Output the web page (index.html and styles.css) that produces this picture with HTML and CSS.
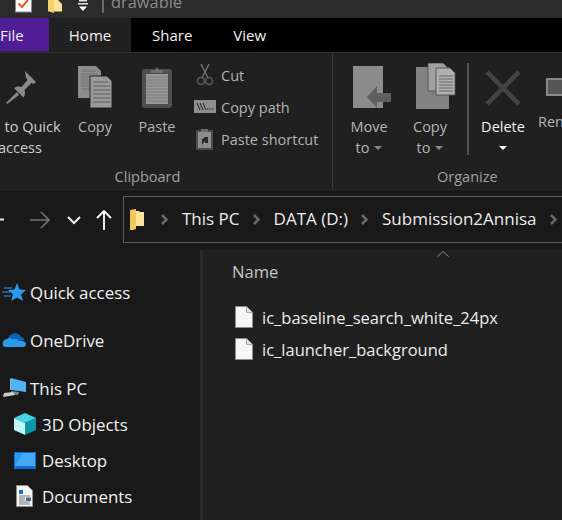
FILE: index.html
```html
<!DOCTYPE html>
<html lang="en">
<head>
<meta charset="utf-8">
<title>drawable</title>
<link rel="stylesheet" href="styles.css">
</head>
<body>
<div class="window">
  <header class="titlebar">
    <svg class="qa-check" width="18" height="13" viewBox="0 0 18 13"><rect x="0.5" y="-4" width="16" height="16" fill="#fff" stroke="#8f8f8f"/><path d="M3.5 3.5l3.5 3.5 6-7" fill="none" stroke="#e8591f" stroke-width="2"/></svg>
    <svg class="qa-folder" width="15" height="13" viewBox="0 0 15 13"><path d="M0 0h6v13l-5-1.500H0z" fill="#f4d06f"/><path d="M6 0h4l4 4v7.500H6z" fill="#fbe39a"/></svg>
    <svg class="qa-more" width="10" height="13" viewBox="0 0 10 13"><path d="M1 0h8v1.500H1zM0 3h10v1.500H0z" fill="#e6e6e6"/><path d="M1 6.500h8L5 11z" fill="#fff"/></svg>
    <span class="title-sep"></span>
    <span class="title-text">drawable</span>
  </header>

  <nav class="tabs">
    <span class="tab tab-file">File</span>
    <span class="tab tab-home">Home</span>
    <span class="tab tab-share">Share</span>
    <span class="tab tab-view">View</span>
  </nav>

  <section class="ribbon">
    <div class="group group-clipboard">
      <div class="group-body">
        <div class="big big-pin">
          <svg class="big-icon" width="36" height="42" viewBox="0 0 36 42"><path d="M23 5l11 11-2.500 2-2-1-7 7c1 3.500.5 5.500-1 7.500L12 22c2-1.500 4.500-2 7.500-1l6-7-1.500-2.500z" fill="#8b8b8b"/><path d="M15 26l-11 11 1 1 12-9z" fill="#8b8b8b"/></svg>
          <span class="big-label">Pin to Quick<br>access</span>
        </div>
        <div class="big big-copy">
          <svg class="big-icon" width="36" height="42" viewBox="0 0 36 42"><path d="M1 0h18l5 5v27H1z" fill="#8d8d8d"/><path d="M4 5h15M4 8h17M4 11h17M4 14h17M4 17h17M4 20h17M4 23h17" stroke="#707070"/><path d="M13 10h17l5 5v27H13z" fill="#9a9a9a" stroke="#222"/><path d="M16 16h15M16 20h17M16 24h17M16 28h17M16 32h17M16 36h17" stroke="#5e5e5e"/></svg>
          <span class="big-label">Copy</span>
        </div>
        <div class="big big-paste">
          <svg class="big-icon" width="30" height="42" viewBox="0 0 30 42"><rect x="0" y="3" width="30" height="39" rx="3" fill="#4f4f4f"/><rect x="4" y="8" width="22" height="30" fill="#979797"/><path d="M4 11h22M4 14h22M4 17h22M4 20h22M4 23h22M4 26h22M4 29h22M4 32h22M4 35h22" stroke="#7d7d7d"/><path d="M9 7V4h4l2-3 2 3h4v3z" fill="#6f6f6f"/></svg>
          <span class="big-label">Paste</span>
        </div>
        <div class="small-list">
          <div class="small">
            <svg class="small-icon" width="18" height="22" viewBox="0 0 18 22"><path d="M5 0l7 14M13 0L6 14" stroke="#6f6f6f" stroke-width="1.500" fill="none"/><circle cx="5" cy="17" r="3.500" fill="none" stroke="#5c5c5c" stroke-width="1.500"/><circle cx="13" cy="17" r="3.500" fill="none" stroke="#5c5c5c" stroke-width="1.500"/></svg>
            <span>Cut</span>
          </div>
          <div class="small">
            <svg class="small-icon" width="22" height="14" viewBox="0 0 22 14"><rect width="22" height="13" fill="#8e8e8e"/><path d="M3 3l3 7M6 3l3 7M9 3l3 7" stroke="#222" stroke-width="1"/><path d="M13 9h7" stroke="#222" stroke-dasharray="1.500 1"/></svg>
            <span>Copy path</span>
          </div>
          <div class="small">
            <svg class="small-icon" width="18" height="22" viewBox="0 0 18 22"><rect y="2" width="17" height="20" rx="1" fill="#4d4d4d"/><rect x="2" y="4" width="13" height="16" fill="#8d8d8d"/><path d="M5 1h7v3H5z" fill="#6a6a6a"/><path d="M6 17v-5l-1 0 4-3 3 0v6l-3 0v-2z" fill="#2a2a2a"/></svg>
            <span>Paste shortcut</span>
          </div>
        </div>
      </div>
      <div class="group-name">Clipboard</div>
    </div>

    <div class="group group-organize">
      <div class="group-body">
        <div class="big big-move">
          <svg class="big-icon" width="40" height="42" viewBox="0 0 40 42"><path d="M1 0h30v42H1z" fill="#8c8c8c"/><path d="M15 31l10-11v7h14v9H25v6z" fill="#5f5f5f"/></svg>
          <span class="big-label">Move<br>to<i class="caret"></i></span>
        </div>
        <div class="big big-copyto">
          <svg class="big-icon" width="41" height="46" viewBox="0 0 41 46"><path d="M1 4h33v42H1z" fill="#828282"/><path d="M13 0h15l5 5v23H13z" fill="#a0a0a0" stroke="#555"/><path d="M21 5h14l5 5v22H21z" fill="#b0b0b0" stroke="#555"/><path d="M24 13h14M24 16h14M24 19h14M24 22h14M24 25h14M24 28h14" stroke="#666"/></svg>
          <span class="big-label">Copy<br>to<i class="caret"></i></span>
        </div>
        <span class="org-sep"></span>
        <div class="big big-delete">
          <svg class="big-icon" width="36" height="36" viewBox="0 0 36 36"><path d="M2 2l32 32M34 2L2 34" stroke="#454545" stroke-width="4.500" fill="none"/></svg>
          <span class="big-label strong">Delete<br><i class="caret caret-white"></i></span>
        </div>
        <div class="big big-rename">
          <svg class="big-icon" width="24" height="18" viewBox="0 0 24 18"><rect x="1" y="1" width="22" height="16" fill="#555" stroke="#8a8a8a" stroke-width="2"/></svg>
          <span class="big-label">Rename</span>
        </div>
      </div>
      <div class="group-name">Organize</div>
    </div>
  </section>

  <div class="addressbar">
    <svg class="nav-back" width="4" height="3" viewBox="0 0 4 3"><path d="M0 1.500h4" stroke="#e8e8e8" stroke-width="2"/></svg>
    <svg class="nav-forward" width="20" height="18" viewBox="0 0 20 18"><path d="M0 9h19M11 1l8 8-8 8" fill="none" stroke="#767676" stroke-width="1.600"/></svg>
    <svg class="nav-recent" width="14" height="9" viewBox="0 0 14 9"><path d="M1 1l6 6 6-6" fill="none" stroke="#eee" stroke-width="2"/></svg>
    <svg class="nav-up" width="16" height="20" viewBox="0 0 16 20"><path d="M8 20V1M1 8l7-7 7 7" fill="none" stroke="#fff" stroke-width="1.800"/></svg>
    <div class="crumbs">
      <svg class="crumb-folder" width="15" height="21" viewBox="0 0 15 21"><path d="M0 1l6-1v20l-3 1H0z" fill="#f1c75e"/><path d="M6 2h3l1 1h4v14H6z" fill="#fbe29a"/></svg>
      <svg class="chev" width="7" height="11" viewBox="0 0 7 11"><path d="M1 1l4.500 4.500L1 10" fill="none" stroke="#6a6a6a" stroke-width="2.500"/></svg><span class="crumb">This PC</span>
      <svg class="chev" width="7" height="11" viewBox="0 0 7 11"><path d="M1 1l4.500 4.500L1 10" fill="none" stroke="#6a6a6a" stroke-width="2.500"/></svg><span class="crumb">DATA (D:)</span>
      <svg class="chev" width="7" height="11" viewBox="0 0 7 11"><path d="M1 1l4.500 4.500L1 10" fill="none" stroke="#6a6a6a" stroke-width="2.500"/></svg><span class="crumb">Submission2Annisa</span>
      <svg class="chev" width="7" height="11" viewBox="0 0 7 11"><path d="M1 1l4.500 4.500L1 10" fill="none" stroke="#6a6a6a" stroke-width="2.500"/></svg>
    </div>
  </div>

  <div class="content">
    <aside class="sidebar">
      <div class="nav-row head">
        <svg class="nav-icon" width="24" height="18" viewBox="0 0 24 18"><path d="M15 0l2.500 6.500L24 7l-5 4.500L21 18l-6-3.500L9 18l2-6.500L6 7l6.500-.5z" fill="#2a9bf0"/><path d="M2 5h8M0 9h8M2 13h7" stroke="#2a9bf0"/></svg>
        <span>Quick access</span>
      </div>
      <div class="nav-row head">
        <svg class="nav-icon" width="24" height="18" viewBox="0 0 24 18"><path d="M6 8a7 7 0 0 1 13-2c2 0 3 1 3 3l-16 0z" fill="#0c64b8"/><path d="M1 14c-1-3 1-6 4-6 2-1.500 4-1 6 .5 3-1 5 0 6 1 3-.5 7 1 7 3.500 0 2-1 3-3 3H4c-2 0-3-1-3-2z" fill="#2a9be8"/></svg>
        <span>OneDrive</span>
      </div>
      <div class="nav-row head">
        <svg class="nav-icon" width="24" height="20" viewBox="0 0 24 20"><path d="M9 0l15 4v10l-15-2z" fill="#4db4f5"/><path d="M9 0l-1 1v11l1 0z" fill="#9fb4c4"/><path d="M9 13l8 1-1 3-6-1z" fill="#888"/><path d="M2 15l9-1 2 3-12 2z" fill="#cfcfcf"/></svg>
        <span>This PC</span>
      </div>
      <div class="nav-row child">
        <svg class="nav-icon" width="22" height="22" viewBox="0 0 22 22"><path d="M11 0l11 5-11 5L0 5z" fill="#45d3e6"/><path d="M0 5l11 5v12L0 17z" fill="#c2f2f5"/><path d="M22 5l-11 5v12l11-5z" fill="#0d97ab"/></svg>
        <span>3D Objects</span>
      </div>
      <div class="nav-row child">
        <svg class="nav-icon" width="22" height="17" viewBox="0 0 22 17"><rect width="22" height="17" fill="#0a6fd0"/><rect x="1" y="1" width="20" height="13" fill="#2a9bf2"/><path d="M1 14L9 1h12v13z" fill="#46a9f5"/></svg>
        <span>Desktop</span>
      </div>
      <div class="nav-row child">
        <svg class="nav-icon doc" width="17" height="22" viewBox="0 0 17 22"><path d="M.5.500h11l5 5v16H.5z" fill="#f4f4f4" stroke="#8f8f8f"/><path d="M3 7h4" stroke="#1e6fc8" stroke-width="4"/><path d="M3 11h11M3 13h6M3 15h6M3 17h11M3 19h11" stroke="#777"/><rect x="10" y="12.500" width="5" height="3.500" fill="#3d6c98"/></svg>
        <span>Documents</span>
      </div>
    </aside>
    <main class="files">
      <svg class="sort-caret" width="12" height="6" viewBox="0 0 12 6"><path d="M.5 5.500L6 .5l5.500 5" fill="none" stroke="#8a8a8a"/></svg>
      <div class="col-name">Name</div>
      <div class="file-row">
        <svg class="file-icon" width="18" height="22" viewBox="0 0 18 22"><path d="M.5.500h11l6 6v15H.5z" fill="#f6f6f6" stroke="#8d8d8d"/><path d="M11.500.500v6h6" fill="#ddd" stroke="#aaa"/></svg>
        <span>ic_baseline_search_white_24px</span>
      </div>
      <div class="file-row">
        <svg class="file-icon" width="18" height="22" viewBox="0 0 18 22"><path d="M.5.500h11l6 6v15H.5z" fill="#f6f6f6" stroke="#8d8d8d"/><path d="M11.500.500v6h6" fill="#ddd" stroke="#aaa"/></svg>
        <span>ic_launcher_background</span>
      </div>
    </main>
  </div>
</div>
</body>
</html>
```

FILE: styles.css
```css
* { box-sizing: border-box; }
html, body { margin: 0; padding: 0; }
body {
  width: 562px;
  height: 520px;
  overflow: hidden;
  background: #191919;
  font-family: "Open Sans", "Noto Sans", sans-serif;
  font-size: 15px;
  color: #fff;
}
.window { width: 562px; height: 520px; display: flex; flex-direction: column; overflow: hidden; }

.titlebar {
  height: 18px; flex: none; background: #2b2b2b; display: flex; align-items: flex-start;
  overflow: hidden; padding-left: 15px;
}
.qa-folder { margin-left: 15px; }
.qa-more { margin-left: 15px; }
.title-sep { width: 2px; height: 13px; background: #6a6a6a; margin-left: 14px; }
.title-text { margin-left: 7px; margin-top: -9px; color: #8a8a8a; font-size: 16.400px; line-height: 22px; }

.tabs { height: 34px; flex: none; background: #000; display: flex; align-items: center; overflow: hidden; }
.tab { height: 34px; line-height: 34px; font-size: 15px; color: #f2f2f2; flex: none; }
.tab-file { width: 49px; background: #4f1d96; text-align: right; padding-right: 30px; border-bottom: 1px solid #2b2b2b; }
.tab-home { width: 82px; background: #202020; text-align: center; }
.tab-share { margin-left: 21px; }
.tab-view { margin-left: 41px; }

.ribbon {
  height: 138px; flex: none; background: #202020; border-top: 1px solid #2e2e2e; border-bottom: 1px solid #2b2b2b;
  display: flex; overflow: hidden;
}
.group { flex: none; display: flex; flex-direction: column; position: relative; }
.group-clipboard { width: 333px; border-right: 1px solid #3a3a3a; }
.group-organize { flex: 1; }
.group-body { display: flex; height: 114px; flex: none; }
.group-name { text-align: center; font-size: 14.500px; color: #a0a0a0; line-height: 20px; }
.group-clipboard .group-name { margin-left: -37px; }
.group-organize .group-name { margin-left: 40px; text-align: left; padding-left: 64px; }

.big { flex: none; display: flex; flex-direction: column; align-items: center; padding-top: 13px; }
.big-icon { flex: none; height: 42px; }
.big-label { margin-top: 8px; text-align: center; font-size: 14.500px; line-height: 21px; color: #b4b4b4; white-space: nowrap; }
.big-label.strong { color: #f0f0f0; }
.big-pin { width: 100px; margin-left: -30px; }
.big-pin .big-label { color: #cfcfcf; }
.big-copy { width: 50px; }
.big-paste { width: 62px; margin-left: 6px; }
.small-list { margin-left: 6px; padding-top: 6px; display: flex; flex-direction: column; }
.small { height: 32px; display: flex; align-items: center; font-size: 14.500px; color: #b4b4b4; white-space: nowrap; }
.small-icon { width: 22px; flex: none; margin-right: 5px; }

.big-move { width: 56px; margin-left: 8px; }
.big-move .big-icon { margin-left: 6px; }
.big-copyto { width: 50px; margin-left: 8px; padding-top: 10px; }
.big-copyto .big-icon { height: 46px; margin-left: 10px; }
.big-copyto .big-label { margin-top: 7px; }
.org-sep { width: 2px; height: 92px; background: #555; margin-left: 12px; margin-top: 10px; flex: none; }
.big-delete { width: 56px; margin-left: 6px; padding-top: 17px; }
.big-delete .big-icon { height: 36px; }
.big-delete .big-label { margin-top: 10px; }
.big-rename { width: 60px; margin-left: 7px; padding-top: 25px; align-items: flex-start; }
.big-rename .big-icon { height: 18px; margin-left: 8px; }
.big-rename .big-label { margin-top: 15px; }
.caret { display: inline-block; width: 0; height: 0; border: 4px solid transparent; border-top: 4px solid #8a8a8a; border-bottom: 0; margin-left: 5px; vertical-align: 3px; }
.caret-white { border-top-color: #fff; margin-left: 0; }

.addressbar { height: 60px; flex: none; display: flex; align-items: center; background: #191919; }
.nav-back { flex: none; margin-top: -2px; }
.nav-forward { flex: none; margin-left: 26px; }
.nav-recent { flex: none; margin-left: 17px; }
.nav-up { flex: none; margin-left: 15px; }
.crumbs {
  margin-left: 11px; flex: 1; height: 47px; border: 1px solid #5a5a5a; border-right: 0; display: flex; align-items: center;
  padding-left: 6px; white-space: nowrap; margin-top: -1px;
}
.crumb { font-size: 17px; color: #ececec; margin-right: 13px; position: relative; top: -1px; }
.crumb-folder { flex: none; margin-right: 16px; }
.chev { flex: none; margin-right: 14px; }

.content { flex: 1; display: flex; min-height: 0; }
.sidebar { width: 200px; flex: none; padding-top: 24px; background: #191919; }
.nav-row { height: 36px; display: flex; align-items: center; font-size: 16.900px; color: #f2f2f2; white-space: nowrap; }
.nav-row.head { padding-left: 2px; margin-bottom: 12px; }
.nav-row.head:nth-child(3) { margin-bottom: 0; }
.nav-row.head .nav-icon { width: 24px; margin-right: 4px; flex: none; }
.nav-row.child { padding-left: 14px; }
.nav-row.child .nav-icon { width: 22px; margin-right: 6px; flex: none; }
.nav-row.child .doc { margin-left: 2px; margin-right: 9px; width: 17px; }

.files {
  flex: 1; background: #202020; border-left: 3px solid #2a2a2a; padding-left: 29px; position: relative;
}
.sort-caret { position: absolute; left: 234px; top: 1px; }
.col-name { margin-top: 10px; height: 24px; line-height: 24px; font-size: 16.600px; color: #c6c6c6; }
.file-row { height: 32px; display: flex; align-items: center; font-size: 16.500px; color: #ececec; padding-left: 3px; }
.file-row:nth-of-type(2) { margin-top: 17px; }
.file-icon { flex: none; margin-right: 9px; }
```
